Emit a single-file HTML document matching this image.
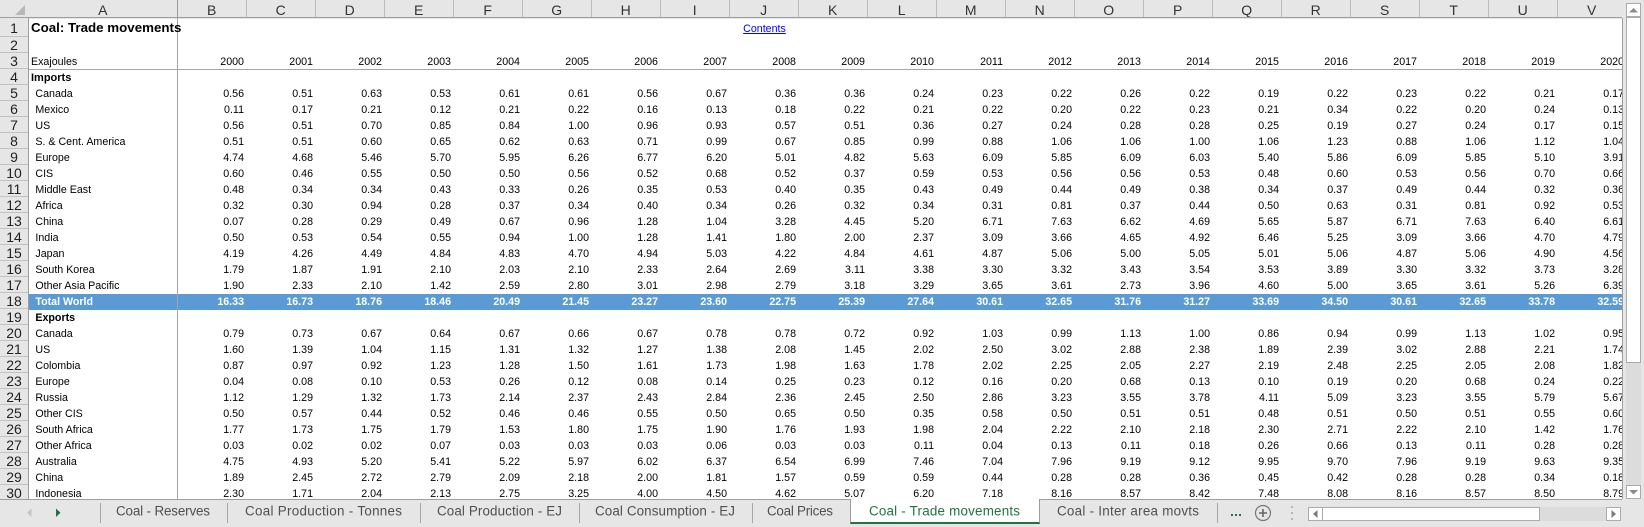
<!DOCTYPE html>
<html><head><meta charset="utf-8"><title>Coal: Trade movements</title>
<style>
html,body{margin:0;padding:0;background:#e6e6e6}
body{width:1644px;height:527px;position:relative;overflow:hidden;font-family:"Liberation Sans",Arial,sans-serif}
.abs{position:absolute}
#ch{left:29px;top:0;width:1593px;height:18px;overflow:hidden;display:flex;background:#e6e6e6}
#ch div{flex:0 0 69px;box-sizing:border-box;border-right:1px solid #bcbcbc;text-align:center;font-size:14px;line-height:21px;height:18px;color:#333}
#ch div:first-child{flex:0 0 148.67px;border-right-color:#9e9e9e}
#rh{left:0;top:18px;width:28px;height:481px;overflow:hidden;border-right:1px solid #9e9e9e;background:#e6e6e6}
#rh div{box-sizing:border-box;height:16px;line-height:16px;border-bottom:1px solid #c2c2c2;text-align:center;font-size:14px;color:#222}
#rh div:first-child{height:19px;line-height:21px}
#sheet{left:29px;top:19px;width:1593px;height:480px;overflow:hidden;background:#fff}
table{border-collapse:collapse;table-layout:fixed;width:1597.67px;font-size:10.67px;color:#000;position:absolute;left:0;top:-1px}
col.a{width:148.67px}col.n{width:69px}
tr{height:16px}
td{padding:0 2.67px 0 0;text-align:right;line-height:16px;white-space:nowrap;overflow:visible;height:16px}
td.l{text-align:left;padding:0 0 0 2px}
td.i{text-align:left;padding:0 0 0 6.4px}
td.b{font-weight:bold}
tr.t td{background:#5b9bd5;color:#fff;font-weight:bold}
.sep{position:absolute;width:1px;top:503px;height:20px;background:#a6a6a6}
.tab{position:absolute;top:502px;height:18px;line-height:18px;white-space:nowrap}
.btn{position:absolute;background:#fff;border:1px solid #ababab;box-sizing:border-box}
.dn{position:relative;top:0}
</style></head><body>
<div class="abs" id="ch"><div>A</div><div>B</div><div>C</div><div>D</div><div>E</div><div>F</div><div>G</div><div>H</div><div>I</div><div>J</div><div>K</div><div>L</div><div>M</div><div>N</div><div>O</div><div>P</div><div>Q</div><div>R</div><div>S</div><div>T</div><div>U</div><div>V</div></div>
<svg class="abs" style="left:0;top:0" width="29" height="18"><path d="M25 5V15H15Z" fill="#b8b8b8"/></svg>
<div class="abs" style="left:0;top:17px;width:1622px;height:1px;background:#9e9e9e"></div>
<div class="abs" id="rh"><div>1</div><div>2</div><div>3</div><div>4</div><div>5</div><div>6</div><div>7</div><div>8</div><div>9</div><div>10</div><div>11</div><div>12</div><div>13</div><div>14</div><div>15</div><div>16</div><div>17</div><div>18</div><div>19</div><div>20</div><div>21</div><div>22</div><div>23</div><div>24</div><div>25</div><div>26</div><div>27</div><div>28</div><div>29</div><div>30</div></div>
<div class="abs" id="sheet">
<table><colgroup><col class="a"><col class="n" span="21"></colgroup>
<tr style="height:20px"><td class="l b" style="font-size:13.33px;line-height:20px;overflow:visible;position:relative;z-index:2"><span class="dn">Coal: Trade movements</span><td><td><td><td><td><td><td><td><td colspan="2" style="text-align:left;padding-left:13.5px;line-height:20px"><span class="dn" style="top:1px;color:#00f;text-decoration:underline">Contents</span><td><td><td><td><td><td><td><td><td><td></tr>
<tr><td colspan="22"></tr>
<tr><td class="l">Exajoules<td>2000<td>2001<td>2002<td>2003<td>2004<td>2005<td>2006<td>2007<td>2008<td>2009<td>2010<td>2011<td>2012<td>2013<td>2014<td>2015<td>2016<td>2017<td>2018<td>2019<td>2020</tr>
<tr><td class="l b" style="font-size:11px">Imports<td colspan="21"></tr>
<tr><td class="i">Canada<td>0.56<td>0.51<td>0.63<td>0.53<td>0.61<td>0.61<td>0.56<td>0.67<td>0.36<td>0.36<td>0.24<td>0.23<td>0.22<td>0.26<td>0.22<td>0.19<td>0.22<td>0.23<td>0.22<td>0.21<td>0.17</tr>
<tr><td class="i">Mexico<td>0.11<td>0.17<td>0.21<td>0.12<td>0.21<td>0.22<td>0.16<td>0.13<td>0.18<td>0.22<td>0.21<td>0.22<td>0.20<td>0.22<td>0.23<td>0.21<td>0.34<td>0.22<td>0.20<td>0.24<td>0.13</tr>
<tr><td class="i">US<td>0.56<td>0.51<td>0.70<td>0.85<td>0.84<td>1.00<td>0.96<td>0.93<td>0.57<td>0.51<td>0.36<td>0.27<td>0.24<td>0.28<td>0.28<td>0.25<td>0.19<td>0.27<td>0.24<td>0.17<td>0.15</tr>
<tr><td class="i">S. &amp; Cent. America<td>0.51<td>0.51<td>0.60<td>0.65<td>0.62<td>0.63<td>0.71<td>0.99<td>0.67<td>0.85<td>0.99<td>0.88<td>1.06<td>1.06<td>1.00<td>1.06<td>1.23<td>0.88<td>1.06<td>1.12<td>1.04</tr>
<tr><td class="i">Europe<td>4.74<td>4.68<td>5.46<td>5.70<td>5.95<td>6.26<td>6.77<td>6.20<td>5.01<td>4.82<td>5.63<td>6.09<td>5.85<td>6.09<td>6.03<td>5.40<td>5.86<td>6.09<td>5.85<td>5.10<td>3.91</tr>
<tr><td class="i">CIS<td>0.60<td>0.46<td>0.55<td>0.50<td>0.50<td>0.56<td>0.52<td>0.68<td>0.52<td>0.37<td>0.59<td>0.53<td>0.56<td>0.56<td>0.53<td>0.48<td>0.60<td>0.53<td>0.56<td>0.70<td>0.66</tr>
<tr><td class="i">Middle East<td>0.48<td>0.34<td>0.34<td>0.43<td>0.33<td>0.26<td>0.35<td>0.53<td>0.40<td>0.35<td>0.43<td>0.49<td>0.44<td>0.49<td>0.38<td>0.34<td>0.37<td>0.49<td>0.44<td>0.32<td>0.36</tr>
<tr><td class="i">Africa<td>0.32<td>0.30<td>0.94<td>0.28<td>0.37<td>0.34<td>0.40<td>0.34<td>0.26<td>0.32<td>0.34<td>0.31<td>0.81<td>0.37<td>0.44<td>0.50<td>0.63<td>0.31<td>0.81<td>0.92<td>0.53</tr>
<tr><td class="i">China<td>0.07<td>0.28<td>0.29<td>0.49<td>0.67<td>0.96<td>1.28<td>1.04<td>3.28<td>4.45<td>5.20<td>6.71<td>7.63<td>6.62<td>4.69<td>5.65<td>5.87<td>6.71<td>7.63<td>6.40<td>6.61</tr>
<tr><td class="i">India<td>0.50<td>0.53<td>0.54<td>0.55<td>0.94<td>1.00<td>1.28<td>1.41<td>1.80<td>2.00<td>2.37<td>3.09<td>3.66<td>4.65<td>4.92<td>6.46<td>5.25<td>3.09<td>3.66<td>4.70<td>4.79</tr>
<tr><td class="i">Japan<td>4.19<td>4.26<td>4.49<td>4.84<td>4.83<td>4.70<td>4.94<td>5.03<td>4.22<td>4.84<td>4.61<td>4.87<td>5.06<td>5.00<td>5.05<td>5.01<td>5.06<td>4.87<td>5.06<td>4.90<td>4.56</tr>
<tr><td class="i">South Korea<td>1.79<td>1.87<td>1.91<td>2.10<td>2.03<td>2.10<td>2.33<td>2.64<td>2.69<td>3.11<td>3.38<td>3.30<td>3.32<td>3.43<td>3.54<td>3.53<td>3.89<td>3.30<td>3.32<td>3.73<td>3.28</tr>
<tr><td class="i">Other Asia Pacific<td>1.90<td>2.33<td>2.10<td>1.42<td>2.59<td>2.80<td>3.01<td>2.98<td>2.79<td>3.18<td>3.29<td>3.65<td>3.61<td>2.73<td>3.96<td>4.60<td>5.00<td>3.65<td>3.61<td>5.26<td>6.39</tr>
<tr class="t"><td class="i">Total World<td>16.33<td>16.73<td>18.76<td>18.46<td>20.49<td>21.45<td>23.27<td>23.60<td>22.75<td>25.39<td>27.64<td>30.61<td>32.65<td>31.76<td>31.27<td>33.69<td>34.50<td>30.61<td>32.65<td>33.78<td>32.59</tr>
<tr><td class="i b">Exports<td colspan="21"></tr>
<tr><td class="i">Canada<td>0.79<td>0.73<td>0.67<td>0.64<td>0.67<td>0.66<td>0.67<td>0.78<td>0.78<td>0.72<td>0.92<td>1.03<td>0.99<td>1.13<td>1.00<td>0.86<td>0.94<td>0.99<td>1.13<td>1.02<td>0.95</tr>
<tr><td class="i">US<td>1.60<td>1.39<td>1.04<td>1.15<td>1.31<td>1.32<td>1.27<td>1.38<td>2.08<td>1.45<td>2.02<td>2.50<td>3.02<td>2.88<td>2.38<td>1.89<td>2.39<td>3.02<td>2.88<td>2.21<td>1.74</tr>
<tr><td class="i">Colombia<td>0.87<td>0.97<td>0.92<td>1.23<td>1.28<td>1.50<td>1.61<td>1.73<td>1.98<td>1.63<td>1.78<td>2.02<td>2.25<td>2.05<td>2.27<td>2.19<td>2.48<td>2.25<td>2.05<td>2.08<td>1.82</tr>
<tr><td class="i">Europe<td>0.04<td>0.08<td>0.10<td>0.53<td>0.26<td>0.12<td>0.08<td>0.14<td>0.25<td>0.23<td>0.12<td>0.16<td>0.20<td>0.68<td>0.13<td>0.10<td>0.19<td>0.20<td>0.68<td>0.24<td>0.22</tr>
<tr><td class="i">Russia<td>1.12<td>1.29<td>1.32<td>1.73<td>2.14<td>2.37<td>2.43<td>2.84<td>2.36<td>2.45<td>2.50<td>2.86<td>3.23<td>3.55<td>3.78<td>4.11<td>5.09<td>3.23<td>3.55<td>5.79<td>5.67</tr>
<tr><td class="i">Other CIS<td>0.50<td>0.57<td>0.44<td>0.52<td>0.46<td>0.46<td>0.55<td>0.50<td>0.65<td>0.50<td>0.35<td>0.58<td>0.50<td>0.51<td>0.51<td>0.48<td>0.51<td>0.50<td>0.51<td>0.55<td>0.60</tr>
<tr><td class="i">South Africa<td>1.77<td>1.73<td>1.75<td>1.79<td>1.53<td>1.80<td>1.75<td>1.90<td>1.76<td>1.93<td>1.98<td>2.04<td>2.22<td>2.10<td>2.18<td>2.30<td>2.71<td>2.22<td>2.10<td>1.42<td>1.76</tr>
<tr><td class="i">Other Africa<td>0.03<td>0.02<td>0.02<td>0.07<td>0.03<td>0.03<td>0.03<td>0.06<td>0.03<td>0.03<td>0.11<td>0.04<td>0.13<td>0.11<td>0.18<td>0.26<td>0.66<td>0.13<td>0.11<td>0.28<td>0.28</tr>
<tr><td class="i">Australia<td>4.75<td>4.93<td>5.20<td>5.41<td>5.22<td>5.97<td>6.02<td>6.37<td>6.54<td>6.99<td>7.46<td>7.04<td>7.96<td>9.19<td>9.12<td>9.95<td>9.70<td>7.96<td>9.19<td>9.63<td>9.35</tr>
<tr><td class="i">China<td>1.89<td>2.45<td>2.72<td>2.79<td>2.09<td>2.18<td>2.00<td>1.81<td>1.57<td>0.59<td>0.59<td>0.44<td>0.28<td>0.28<td>0.36<td>0.45<td>0.42<td>0.28<td>0.28<td>0.34<td>0.18</tr>
<tr><td class="i">Indonesia<td>2.30<td>1.71<td>2.04<td>2.13<td>2.75<td>3.25<td>4.00<td>4.50<td>4.62<td>5.07<td>6.20<td>7.18<td>8.16<td>8.57<td>8.42<td>7.48<td>8.08<td>8.16<td>8.57<td>8.50<td>8.79</tr>
</table>
</div>
<div class="abs" style="left:177px;top:18px;width:1px;height:481px;background:#a3a3a3"></div>
<div class="abs" style="left:29px;top:69px;width:1593px;height:1px;background:#a6a6a6"></div>
<div class="abs" style="left:1622px;top:18px;width:1px;height:481px;background:#9e9e9e"></div>
<div class="abs" style="left:1626px;top:3px;width:15px;height:496px;background:#dcdcdc"></div>
<div class="btn" style="left:1626px;top:3px;width:15px;height:14px"></div>
<svg class="abs" style="left:1626px;top:3px" width="15" height="14"><path d="M3 9.5L7.5 5L12 9.5Z" fill="#8a8a8a"/></svg>
<div class="btn" style="left:1626px;top:17px;width:15px;height:346px"></div>
<div class="btn" style="left:1626px;top:485px;width:15px;height:14px"></div>
<svg class="abs" style="left:1626px;top:485px" width="15" height="14"><path d="M3 5L7.5 9.5L12 5Z" fill="#8a8a8a"/></svg>
<div class="abs" style="left:0;top:499px;width:1644px;height:28px;background:#e6e6e6"></div>
<div class="abs" style="left:0;top:499px;width:1622px;height:1px;background:#9e9e9e"></div>
<svg class="abs" style="left:0;top:499px" width="90" height="28"><path d="M31.5 9.5V18L27 13.7Z" fill="#c4c4c4"/><path d="M56 9.5V18L60.5 13.7Z" fill="#217346"/></svg>
<div class="sep" style="left:100px"></div><div class="sep" style="left:227px"></div><div class="sep" style="left:420px"></div><div class="sep" style="left:579px"></div><div class="sep" style="left:752px"></div><div class="sep" style="left:1217px"></div>
<div class="abs" style="left:850px;top:499px;width:190px;height:25px;background:#fff;box-sizing:border-box;border-left:1px solid #9e9e9e;border-right:1px solid #9e9e9e;border-bottom:2px solid #217346"></div>
<div class="tab" style="left:116px;width:94px"><svg width="94" height="18" style="display:block"><text x="0" y="13.5" font-size="13.4" fill="#505050" textLength="94" font-family="Liberation Sans">Coal - Reserves</text></svg></div>
<div class="tab" style="left:245px;width:157px"><svg width="157" height="18" style="display:block"><text x="0" y="13.5" font-size="13.4" fill="#505050" textLength="157" font-family="Liberation Sans">Coal Production - Tonnes</text></svg></div>
<div class="tab" style="left:437px;width:125px"><svg width="125" height="18" style="display:block"><text x="0" y="13.5" font-size="13.4" fill="#505050" textLength="125" font-family="Liberation Sans">Coal Production - EJ</text></svg></div>
<div class="tab" style="left:595px;width:140px"><svg width="140" height="18" style="display:block"><text x="0" y="13.5" font-size="13.4" fill="#505050" textLength="140" font-family="Liberation Sans">Coal Consumption - EJ</text></svg></div>
<div class="tab" style="left:767px;width:66px"><svg width="66" height="18" style="display:block"><text x="0" y="13.5" font-size="13.4" fill="#505050" textLength="66" font-family="Liberation Sans">Coal Prices</text></svg></div>
<div class="tab" style="left:869px;width:151px"><svg width="151" height="18" style="display:block"><text x="0" y="13.5" font-size="13.4" fill="#217346" textLength="151" font-family="Liberation Sans">Coal - Trade movements</text></svg></div>
<div class="tab" style="left:1057px;width:142px"><svg width="142" height="18" style="display:block"><text x="0" y="13.5" font-size="13.4" fill="#505050" textLength="142" font-family="Liberation Sans">Coal - Inter area movts</text></svg></div>
<svg class="abs" style="left:1225px;top:499px" width="80" height="28"><g fill="#217346"><rect x="6" y="15" width="2" height="2"/><rect x="10" y="15" width="2" height="2"/><rect x="14" y="15" width="2" height="2"/></g><circle cx="38" cy="14" r="7.5" fill="none" stroke="#777" stroke-width="1.2"/><path d="M34 14H42M38 10V18" stroke="#666" stroke-width="1.6"/><g fill="#b5b5b5"><rect x="66" y="7" width="2" height="2"/><rect x="66" y="13" width="2" height="2"/><rect x="66" y="19" width="2" height="2"/></g></svg>
<div class="abs" style="left:1308px;top:507px;width:313px;height:14px;background:#dcdcdc"></div>
<div class="btn" style="left:1308px;top:507px;width:15px;height:14px"></div>
<svg class="abs" style="left:1308px;top:507px" width="15" height="14"><path d="M9.5 3V11L5 7Z" fill="#7a7a7a"/></svg>
<div class="btn" style="left:1322px;top:507px;width:218px;height:14px"></div>
<div class="btn" style="left:1606px;top:507px;width:15px;height:14px"></div>
<svg class="abs" style="left:1606px;top:507px" width="15" height="14"><path d="M5.5 3V11L10 7Z" fill="#7a7a7a"/></svg>
</body></html>
